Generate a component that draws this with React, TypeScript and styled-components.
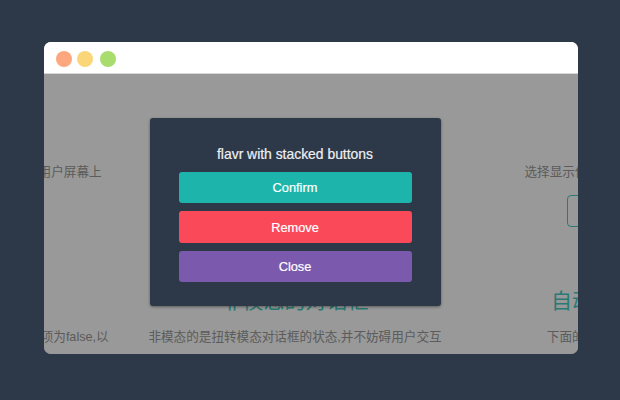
import styled, { createGlobalStyle } from 'styled-components';

const GlobalStyle = createGlobalStyle`
  html, body {
    margin: 0;
    height: 400px;
    overflow: hidden;
    background: #2d3848;
    font-family: "Liberation Sans", "Noto Sans CJK SC", sans-serif;
  }
`;

const Page = styled.div`
  width: 620px;
  height: 400px;
  padding: 42px 42px 46px 44px;
  box-sizing: border-box;
`;

const Window = styled.div`
  position: relative;
  height: 312px;
  border-radius: 7px;
  overflow: hidden;
  background: #fff;
  display: flex;
  flex-direction: column;
`;

const TitleBar = styled.div`
  flex: none;
  height: 32px;
  box-sizing: border-box;
  padding: 2px 0 0 12px;
  display: flex;
  align-items: center;
  background: #fff;
  border-bottom: 1px solid #d8d8d8;
`;

const Dot = styled.span<{ $color: string; $gap: number }>`
  width: 16px;
  height: 16px;
  border-radius: 50%;
  margin-right: ${(p) => p.$gap}px;
  background: ${(p) => p.$color};
`;

const Body = styled.div`
  position: relative;
  flex: 1;
  min-height: 0;
  overflow: hidden;
`;

const Demos = styled.div`
  height: 100%;
  box-sizing: border-box;
  padding: 89px 32px 0 0;
  display: grid;
  grid-template-columns: repeat(3, 340px);
  grid-auto-rows: 124px;
  justify-content: center;
  text-align: center;
`;

const Demo = styled.div`
  display: flex;
  flex-direction: column;
  align-items: center;
`;

const Heading = styled.h3`
  margin: 0 0 13px;
  height: 28px;
  line-height: 28px;
  font-size: 21px;
  font-weight: 400;
  color: #45cbc1;
  white-space: nowrap;
`;

const Note = styled.p`
  margin: 0;
  height: 18px;
  line-height: 18px;
  font-size: 12.6px;
  color: #999;
  white-space: nowrap;
`;

const Outline = styled.button`
  margin-top: 14px;
  width: 136px;
  height: 32px;
  background: transparent;
  border: 1px solid #45cbc1;
  border-radius: 4px;
  color: #45cbc1;
  font: inherit;
  font-size: 13px;
`;

const Overlay = styled.div`
  position: absolute;
  inset: 0;
  padding: 0 32px 4px 0;
  display: flex;
  align-items: center;
  justify-content: center;
  background: rgba(0, 0, 0, 0.4);
`;

const Modal = styled.div`
  width: 291px;
  height: 188px;
  box-sizing: border-box;
  padding: 27px 29px 0;
  display: flex;
  flex-direction: column;
  gap: 7.8px;
  background: #2d3848;
  border-radius: 3px;
  box-shadow: 0 1px 3px rgba(0, 0, 0, 0.4);
`;

const ModalTitle = styled.div`
  height: 19px;
  line-height: 19px;
  text-align: center;
  font-size: 13.9px;
  color: #eef0f2;
  -webkit-text-stroke: 0.2px #eef0f2;
`;

const ActionButton = styled.button<{ $color: string }>`
  height: 31.7px;
  padding: 0;
  border: 0;
  border-radius: 3px;
  background: ${(p) => p.$color};
  color: #fff;
  font: inherit;
  font-size: 12.8px;
  -webkit-text-stroke: 0.2px #fff;
`;

const dots = [
  { color: '#fda77f', gap: 5 },
  { color: '#fbd679', gap: 7 },
  { color: '#a8dc6c', gap: 0 },
];

const actions = [
  { label: 'Confirm', color: '#1db5ab' },
  { label: 'Remove', color: '#fa4a5a' },
  { label: 'Close', color: '#7b5aad' },
];

export default function App() {
  return (
    <>
      <GlobalStyle />
      <Page>
        <Window>
          <TitleBar>
            {dots.map((d) => (
              <Dot key={d.color} $color={d.color} $gap={d.gap} />
            ))}
          </TitleBar>
          <Body>
            <Demos>
              <Demo>
                <Note>这个对话框会始终固定显示,并一直停留在用户屏幕上</Note>
              </Demo>
              <Demo>
                <Note>模态对话框会阻止用户与页面交互</Note>
                <Outline>查看</Outline>
              </Demo>
              <Demo>
                <Note>选择显示位置,然后点击下面的按钮,试试</Note>
                <Outline>显示位置</Outline>
              </Demo>
              <Demo>
                <Heading>模态选项</Heading>
                <Note>这里用来设置对话框的模态选项它默认的选项为false,以</Note>
              </Demo>
              <Demo>
                <Heading>非模态的对话框</Heading>
                <Note>非模态的是扭转模态对话框的状态,并不妨碍用户交互</Note>
              </Demo>
              <Demo>
                <Heading>自动关闭的对话框</Heading>
                <Note>下面的对话框会在几秒钟后关闭</Note>
              </Demo>
            </Demos>
            <Overlay>
              <Modal>
                <ModalTitle>flavr with stacked buttons</ModalTitle>
                {actions.map((a) => (
                  <ActionButton key={a.label} $color={a.color}>
                    {a.label}
                  </ActionButton>
                ))}
              </Modal>
            </Overlay>
          </Body>
        </Window>
      </Page>
    </>
  );
}
